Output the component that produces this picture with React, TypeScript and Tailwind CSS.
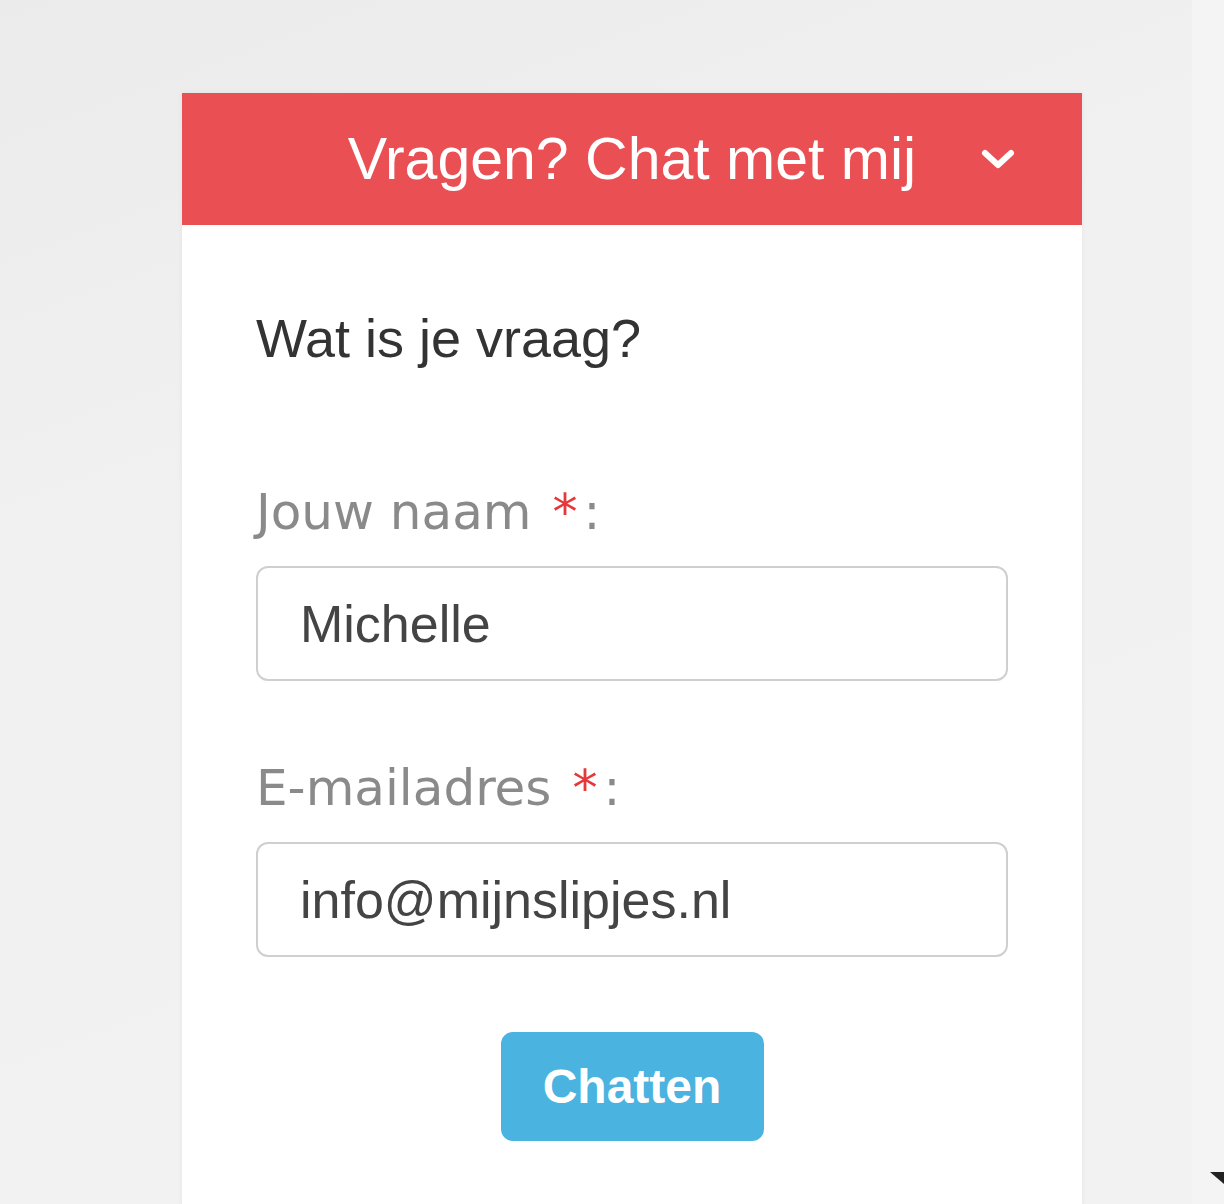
import { useState } from 'react'

const arial = { fontFamily: '"Liberation Sans", Arial, sans-serif' }

function Field({ label, value, onChange }: { label: string; value: string; onChange: (v: string) => void }) {
  return (
    <div className="flex flex-col">
      <label className="h-[60px] flex items-center text-[50px] leading-none text-[#8a8a8a] font-['DejaVu_Sans',Verdana,sans-serif]">
        {label} <span className="text-[#e5383b] ml-[0.42em] mr-[6px]">*</span>:
      </label>
      <input
        value={value}
        onChange={e => onChange(e.target.value)}
        className="mt-[24px] h-[115px] w-full rounded-[12px] border-2 border-[#cfcfcf] bg-white pl-[42px] text-[52px] text-[#444] outline-none font-['Liberation_Sans',Arial,sans-serif]"
      />
    </div>
  )
}

export default function App() {
  const [naam, setNaam] = useState('Michelle')
  const [email, setEmail] = useState('info@mijnslipjes.nl')

  return (
    <div className="flex w-[1224px] min-h-[1204px] bg-[linear-gradient(160deg,#ebebeb_0%,#f1f1f1_35%,#f2f2f2_100%)]" style={arial}>
      <div className="flex-1 pl-[182px] pt-[93px]">
        <div className="w-[900px] bg-white shadow-[0_0_6px_rgba(0,0,0,0.05)]">
          <div className="grid h-[132px] grid-cols-[1fr_auto_1fr] items-center bg-[#ea4f53]">
            <div />
            <span className="text-[59px] leading-none text-white">Vragen? Chat met mij</span>
            <div className="flex justify-end pr-[66px]">
              <svg viewBox="0 0 36 22" className="h-[22px] w-[36px]" fill="none" stroke="white" strokeWidth="6" strokeLinecap="round" strokeLinejoin="round" aria-hidden="true">
                <path d="M5 5l13 12L31 5" />
              </svg>
            </div>
          </div>

          <div className="px-[74px] pt-[82px] pb-[80px]">
            <p className="text-[54px] leading-[62px] text-[#333]">Wat is je vraag?</p>

            <div className="mt-[113px] flex flex-col gap-[77px]">
              <Field label="Jouw naam" value={naam} onChange={setNaam} />
              <Field label="E-mailadres" value={email} onChange={setEmail} />
            </div>

            <div className="mt-[75px] flex justify-center">
              <button className="h-[109px] w-[263px] rounded-[12px] bg-[#4ab3df] text-[48px] font-bold text-white">
                Chatten
              </button>
            </div>
          </div>
        </div>
      </div>
      <div className="relative w-[32px] bg-[#f4f4f4]">
        <div className="absolute right-0 top-[1172px] h-0 w-0 border-l-[14px] border-t-[12px] border-l-transparent border-t-[#222]" />
      </div>
    </div>
  )
}
